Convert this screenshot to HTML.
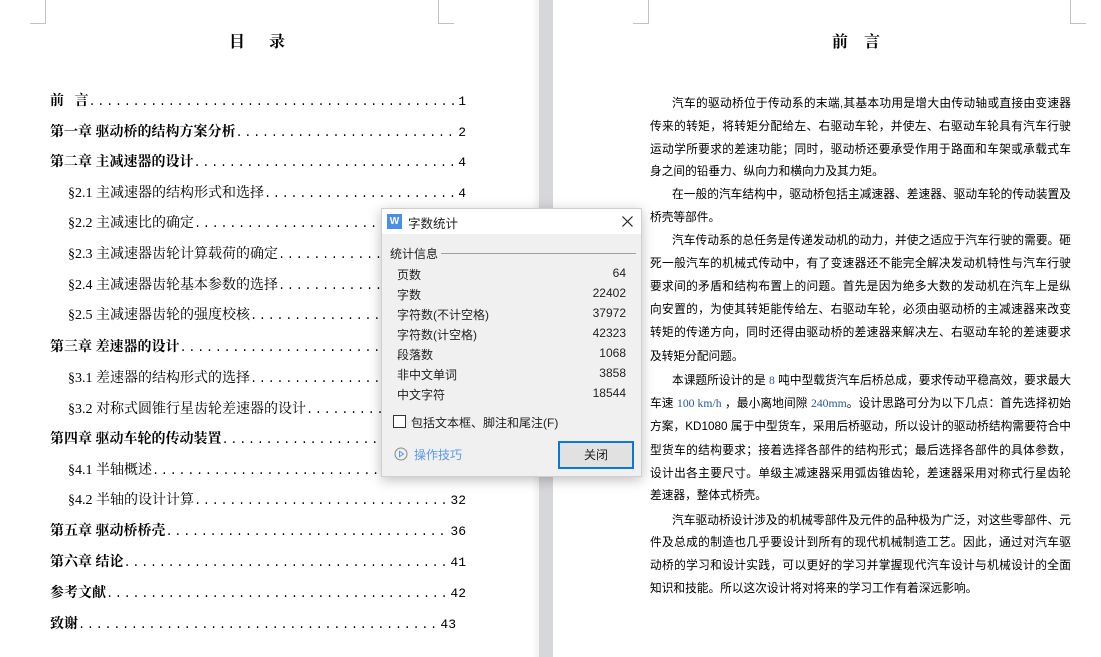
<!DOCTYPE html>
<html><head><meta charset="utf-8"><style>
*{margin:0;padding:0;box-sizing:border-box}
body{width:1101px;height:657px;overflow:hidden;background:#fff;position:relative;font-family:"Liberation Serif","Noto Serif CJK SC",serif;color:#000}
.gap{position:absolute;left:539px;top:0;width:14px;height:657px;background:#d6d7d9}
.shade{position:absolute;left:532px;top:0;width:7px;height:657px;background:linear-gradient(90deg,#fff,#f1f1f1)}
.crn{position:absolute;border-color:#c2c2c2;border-style:solid;width:16px;height:24px}
.title{position:absolute;top:30px;font-size:16px;font-weight:bold;letter-spacing:0}
.row{position:absolute;display:flex;align-items:baseline;font-size:14px;height:20px;line-height:20px;white-space:nowrap;right:635px;top:0}
.row .l{flex:0 0 auto}
.row .d{flex:1 1 auto;overflow:hidden;letter-spacing:1.6px;font-family:"Liberation Mono",monospace;font-size:12px}
.row .p{flex:0 0 auto;font-family:"Liberation Mono",monospace;font-size:13px}
.b{font-weight:bold}
.ln{position:absolute;left:650px;width:421px;font-family:"Liberation Sans","Noto Sans CJK SC",sans-serif;font-size:11.7px;line-height:18px;white-space:nowrap;overflow:hidden;text-align:justify;text-align-last:justify}
.ln.e{text-align-last:left}
.ln.i{padding-left:22px}
.blue{color:#2b5797;font-family:"Liberation Serif",serif}
.dlg{position:absolute;left:381px;top:208px;width:261px;height:269px;background:#f0f0f0;border:1px solid #cfcfcf;box-shadow:0 3px 12px rgba(0,0,0,.25);font-family:"Liberation Sans","Noto Sans CJK SC",sans-serif;font-size:12px;color:#222}
.tb{height:25px;background:#fff;position:relative}
.st{position:absolute;left:15px;font-size:12px}
.sv{position:absolute;right:15px;font-size:12px}
</style></head><body>
<div class="gap"></div><div class="shade"></div>
<div class="crn" style="left:30px;top:0;border-width:0 1px 1px 0"></div>
<div class="crn" style="left:438px;top:0;border-width:0 0 1px 1px"></div>
<div class="crn" style="left:633px;top:0;border-width:0 1px 1px 0"></div>
<div class="crn" style="left:1070px;top:0;border-width:0 0 1px 1px"></div>
<div class="title" style="left:229px;top:29px">目&nbsp;&nbsp;&nbsp;&nbsp;&nbsp;&nbsp;录</div>
<div class="title" style="left:832px;top:29px">前&nbsp;&nbsp;&nbsp;&nbsp;言</div>

<div class="row" style="left:50px;top:92px"><span class="l b">前&nbsp;&nbsp;&nbsp;言 </span><span class="d">..............................................................................</span><span class="p">1</span></div>
<div class="row" style="left:50px;top:123px"><span class="l b">第一章 驱动桥的结构方案分析</span><span class="d">..............................................................................</span><span class="p">2</span></div>
<div class="row" style="left:50px;top:153px"><span class="l b">第二章 主减速器的设计</span><span class="d">..............................................................................</span><span class="p">4</span></div>
<div class="row" style="left:68px;top:184px"><span class="l">§2.1 主减速器的结构形式和选择</span><span class="d">..............................................................................</span><span class="p">4</span></div>
<div class="row" style="left:68px;top:214px"><span class="l">§2.2 主减速比的确定</span><span class="d">..............................................................................</span><span class="p">7</span></div>
<div class="row" style="left:68px;top:245px"><span class="l">§2.3 主减速器齿轮计算载荷的确定</span><span class="d">..............................................................................</span><span class="p">9</span></div>
<div class="row" style="left:68px;top:276px"><span class="l">§2.4 主减速器齿轮基本参数的选择</span><span class="d">..............................................................................</span><span class="p">11</span></div>
<div class="row" style="left:68px;top:306px"><span class="l">§2.5 主减速器齿轮的强度校核</span><span class="d">..............................................................................</span><span class="p">17</span></div>
<div class="row" style="left:50px;top:338px"><span class="l b">第三章 差速器的设计 </span><span class="d">..............................................................................</span><span class="p">22</span></div>
<div class="row" style="left:68px;top:369px"><span class="l">§3.1 差速器的结构形式的选择</span><span class="d">..............................................................................</span><span class="p">22</span></div>
<div class="row" style="left:68px;top:400px"><span class="l">§3.2 对称式圆锥行星齿轮差速器的设计</span><span class="d">..............................................................................</span><span class="p">24</span></div>
<div class="row" style="left:50px;top:430px"><span class="l b">第四章 驱动车轮的传动装置 </span><span class="d">..............................................................................</span><span class="p">31</span></div>
<div class="row" style="left:68px;top:461px"><span class="l">§4.1 半轴概述</span><span class="d">..............................................................................</span><span class="p">31</span></div>
<div class="row" style="left:68px;top:491px"><span class="l">§4.2 半轴的设计计算</span><span class="d">..............................................................................</span><span class="p">32</span></div>
<div class="row" style="left:50px;top:522px"><span class="l b">第五章 驱动桥桥壳</span><span class="d">..............................................................................</span><span class="p">36</span></div>
<div class="row" style="left:50px;top:553px"><span class="l b">第六章 结论</span><span class="d">..............................................................................</span><span class="p">41</span></div>
<div class="row" style="left:50px;top:584px"><span class="l b">参考文献</span><span class="d">..............................................................................</span><span class="p">42</span></div>
<div class="row" style="left:50px;top:615px;right:645px"><span class="l b">致谢</span><span class="d">..............................................................................</span><span class="p">43</span></div>

<div class="ln i" style="top:95px">汽车的驱动桥位于传动系的末端,其基本功用是增大由传动轴或直接由变速器</div>
<div class="ln" style="top:118px">传来的转矩，将转矩分配给左、右驱动车轮，并使左、右驱动车轮具有汽车行驶</div>
<div class="ln" style="top:141px">运动学所要求的差速功能；同时，驱动桥还要承受作用于路面和车架或承载式车</div>
<div class="ln e" style="top:163px">身之间的铅垂力、纵向力和横向力及其力矩。</div>
<div class="ln i" style="top:186px">在一般的汽车结构中，驱动桥包括主减速器、差速器、驱动车轮的传动装置及</div>
<div class="ln e" style="top:209px">桥壳等部件。</div>
<div class="ln i" style="top:232px">汽车传动系的总任务是传递发动机的动力，并使之适应于汽车行驶的需要。砸</div>
<div class="ln" style="top:255px">死一般汽车的机械式传动中，有了变速器还不能完全解决发动机特性与汽车行驶</div>
<div class="ln" style="top:278px">要求间的矛盾和结构布置上的问题。首先是因为绝多大数的发动机在汽车上是纵</div>
<div class="ln" style="top:301px">向安置的，为使其转矩能传给左、右驱动车轮，必须由驱动桥的主减速器来改变</div>
<div class="ln" style="top:324px">转矩的传递方向，同时还得由驱动桥的差速器来解决左、右驱动车轮的差速要求</div>
<div class="ln e" style="top:348px">及转矩分配问题。</div>
<div class="ln i" style="top:372px">本课题所设计的是 <span class="blue">8</span> 吨中型载货汽车后桥总成，要求传动平稳高效，要求最大</div>
<div class="ln" style="top:395px">车速 <span class="blue">100 km/h</span> ，最小离地间隙 <span class="blue">240mm</span>。设计思路可分为以下几点：首先选择初始</div>
<div class="ln" style="top:418px">方案，KD1080 属于中型货车，采用后桥驱动，所以设计的驱动桥结构需要符合中</div>
<div class="ln" style="top:442px">型货车的结构要求；接着选择各部件的结构形式；最后选择各部件的具体参数，</div>
<div class="ln" style="top:465px">设计出各主要尺寸。单级主减速器采用弧齿锥齿轮，差速器采用对称式行星齿轮</div>
<div class="ln e" style="top:487px">差速器，整体式桥壳。</div>
<div class="ln i" style="top:512px">汽车驱动桥设计涉及的机械零部件及元件的品种极为广泛，对这些零部件、元</div>
<div class="ln" style="top:534px">件及总成的制造也几乎要设计到所有的现代机械制造工艺。因此，通过对汽车驱</div>
<div class="ln" style="top:557px">动桥的学习和设计实践，可以更好的学习并掌握现代汽车设计与机械设计的全面</div>
<div class="ln e" style="top:580px">知识和技能。所以这次设计将对将来的学习工作有着深远影响。</div>

<div class="dlg">
 <div class="tb">
  <div style="position:absolute;left:5px;top:5px;width:15px;height:15px;background:#4a8fe6;color:#fff;font-size:10px;line-height:15px;text-align:center;font-weight:bold">W</div>
  <div style="position:absolute;left:26px;top:4px;font-size:12.5px">字数统计</div>
  <svg style="position:absolute;left:240px;top:7px" width="11" height="11"><path d="M0.5 0.5L10.5 10.5M10.5 0.5L0.5 10.5" stroke="#222" stroke-width="1.2"/></svg>
 </div>
 <div style="position:absolute;left:8px;top:36px">统计信息</div>
 <div style="position:absolute;left:59px;top:44px;width:195px;height:1px;background:#a0a0a0"></div>
 <div class="st" style="top:57px">页数</div><div class="sv" style="top:57px">64</div>
 <div class="st" style="top:77px">字数</div><div class="sv" style="top:77px">22402</div>
 <div class="st" style="top:97px">字符数(不计空格)</div><div class="sv" style="top:97px">37972</div>
 <div class="st" style="top:117px">字符数(计空格)</div><div class="sv" style="top:117px">42323</div>
 <div class="st" style="top:137px">段落数</div><div class="sv" style="top:137px">1068</div>
 <div class="st" style="top:157px">非中文单词</div><div class="sv" style="top:157px">3858</div>
 <div class="st" style="top:177px">中文字符</div><div class="sv" style="top:177px">18544</div>
 <div style="position:absolute;left:11px;top:206px;width:13px;height:13px;border:1px solid #333;background:#fff"></div>
 <div style="position:absolute;left:29px;top:205px">包括文本框、脚注和尾注(F)</div>
 <svg style="position:absolute;left:12px;top:238px" width="14" height="14"><circle cx="7" cy="7" r="6" fill="none" stroke="#888" stroke-width="1"/><path d="M5.5 4.3L9.5 7L5.5 9.7Z" fill="none" stroke="#5a9be8" stroke-width="1"/></svg>
 <div style="position:absolute;left:32px;top:237px;color:#5a9be8">操作技巧</div>
 <div style="position:absolute;left:176px;top:232px;width:76px;height:28px;border:2px solid #0a78d7;background:#e1e1e1;text-align:center;line-height:24px">关闭</div>
</div>
</body></html>
